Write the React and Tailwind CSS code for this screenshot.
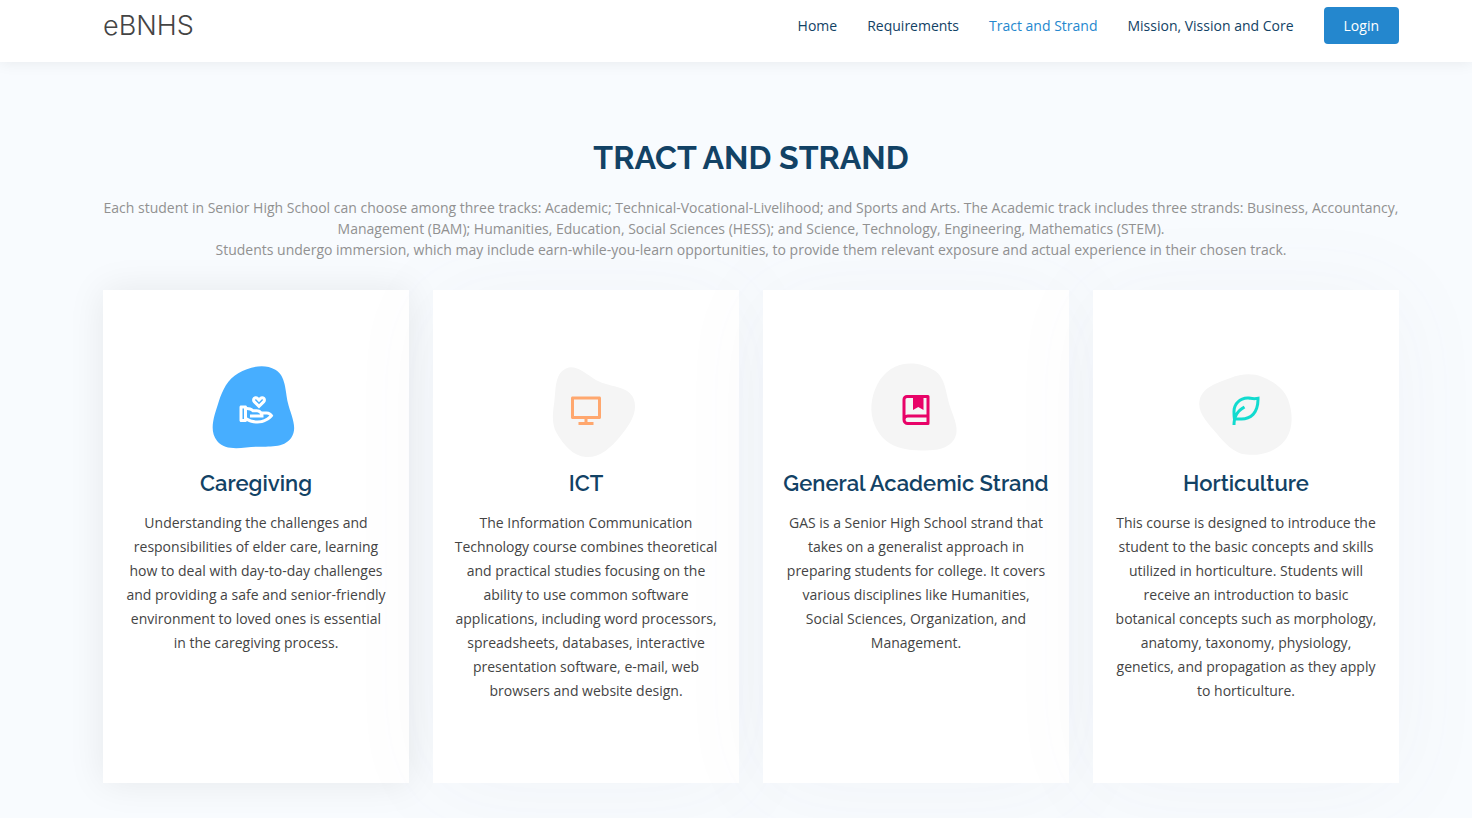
import React from "react";
import { RiHandHeartLine, RiComputerLine, RiLeafLine } from "react-icons/ri";

function BookMarkIcon({ className }) {
  return (
    <svg viewBox="0 0 24 24" fill="currentColor" className={className} aria-hidden="true">
      <path d="M3 18.5V5a3 3 0 0 1 3-3h14a1 1 0 0 1 1 1v18a1 1 0 0 1-1 1H6.5A3.5 3.5 0 0 1 3 18.5zM19 20v-3H6.5a1.5 1.5 0 0 0 0 3H19zM10 4H6a1 1 0 0 0-1 1v10.337A3.486 3.486 0 0 1 6.5 15H19V4h-2v8l-3.5-2-3.5 2V4z" />
    </svg>
  );
}

const links = [
  { label: "Home" },
  { label: "Requirements" },
  { label: "Tract and Strand", active: true },
  { label: "Mission, Vission and Core" },
];

const strands = [
  {
    title: "Caregiving",
    text: "Understanding the challenges and responsibilities of elder care, learning how to deal with day-to-day challenges and providing a safe and senior-friendly environment to loved ones is essential in the caregiving process.",
    Icon: RiHandHeartLine,
    iconClass: "text-white",
    blobClass: "text-[#47aeff]",
    shadow: "shadow-[0_0_35px_0_rgba(0,0,0,0.08)]",
    blob: "M300,521.0016835830174C376.1290562159157,517.8887921683347,466.0731472004068,529.7835943286574,510.70327084640275,468.03025145048787C554.3714126377745,407.6079735673963,508.03601936045806,328.9844924480964,491.2728898941984,256.3432110539036C474.5976632858925,184.082847569629,479.9380746630129,96.60480741107993,416.23090153303,58.64404602377083C348.86323505073057,18.502131276798302,261.93793281208167,40.57373210992963,193.5410806939664,78.93577620505333C130.42746243093433,114.334589627462,98.30271207620316,179.96522072025542,76.75703585869454,249.04625023123273C51.97151888228291,328.5150500222984,13.704378332031375,421.85034740162234,66.52175969318436,486.19268352777647C119.04800174914682,550.1803526380478,217.28368757567262,524.383925680826,300,521.0016835830174",
  },
  {
    title: "ICT",
    text: "The Information Communication Technology course combines theoretical and practical studies focusing on the ability to use common software applications, including word processors, spreadsheets, databases, interactive presentation software, e-mail, web browsers and website design.",
    Icon: RiComputerLine,
    iconClass: "text-[#ffa76e]",
    blobClass: "text-[#f5f5f5]",
    shadow: "shadow-[0_5px_90px_0_rgba(110,123,131,0.05)]",
    blob: "M300,582.0697525312426C382.5290701553225,586.8405444964366,449.9789794690241,525.3245884688669,502.5850820975895,461.55621195738473C556.606425686781,396.0723002908107,615.8543463187945,314.28637112970534,586.6730223649479,234.56875336149918C558.9533121215079,158.8439757836574,454.9685369536778,164.00468322053177,381.49747125262974,130.76875717737553C312.15926192815925,99.40240125094834,248.97055460311594,18.661163978235184,179.8680185752513,50.54337015887873C110.5421016452524,82.52863877960104,119.82277516462835,180.83849132639028,109.12597500060166,256.43424936330496C100.08760227029461,320.3096726198365,92.17705696193138,384.0621239912766,124.79988738764834,439.7174275375508C164.83382741302287,508.01625554203684,220.96474134820875,577.5009287672846,300,582.0697525312426",
  },
  {
    title: "General Academic Strand",
    text: "GAS is a Senior High School strand that takes on a generalist approach in preparing students for college. It covers various disciplines like Humanities, Social Sciences, Organization, and Management.",
    Icon: BookMarkIcon,
    iconClass: "text-[#e80368]",
    blobClass: "text-[#f5f5f5]",
    shadow: "shadow-[0_5px_90px_0_rgba(110,123,131,0.05)]",
    blob: "M300,541.5067337569781C382.14930387511276,545.0595476570109,479.8736841581634,548.3450877840088,526.4010558755058,480.5488172755941C571.5218469581645,414.80211281144784,517.5187510058486,332.0715597781072,496.52539010469104,255.14436215662573C477.37192572678356,184.95920475031193,473.57363656557914,105.61284051026155,413.0603344069578,65.22779650032875C343.27470386102294,18.654635553484475,251.2091493199835,5.337323636656869,175.0934190732945,40.62881213300186C97.87086631185822,76.43348514350839,51.98124368387456,156.15599469081315,36.44837278890362,239.84606092416172C21.716077023791087,319.22268207091537,43.775223500013084,401.1760424656574,96.891909868211,461.97329694683043C147.22146801428983,519.5804099606455,223.5754009179313,538.201503339737,300,541.5067337569781",
  },
  {
    title: "Horticulture",
    text: "This course is designed to introduce the student to the basic concepts and skills utilized in horticulture. Students will receive an introduction to basic botanical concepts such as morphology, anatomy, taxonomy, physiology, genetics, and propagation as they apply to horticulture.",
    Icon: RiLeafLine,
    iconClass: "text-[#11dbcf]",
    blobClass: "text-[#f5f5f5]",
    shadow: "shadow-[0_5px_90px_0_rgba(110,123,131,0.05)]",
    blob: "M300,566.797414625762C385.7384707136149,576.1784315230908,478.7894351017131,552.8928747891023,531.9192734346935,484.94944893311C584.6109503024035,417.5663521118492,582.489472248146,322.67544863468447,553.9536738515405,242.03673114598146C529.1557734026468,171.96086150256528,465.24506316201064,127.66468636344209,395.9583748389544,100.7403814666027C334.2173773831606,76.7482773500951,269.4350130405921,84.62216499799875,207.1952322260088,107.2889140133804C132.92018162631612,134.33871894543012,41.79353780512637,160.00259165414826,22.644507872594943,236.69541883565114C3.319112789854554,314.0945973066697,72.72355303640163,379.243833228382,124.04198916343866,440.3218312028393C172.9286146004772,498.5055451809895,224.45579914871206,558.5317968840102,300,566.797414625762",
  },
];

function Header() {
  return (
    <header className="relative z-10 flex items-start justify-between bg-white pt-[7px] pr-[73px] pb-[17px] pl-[103px] shadow-[0_0_15px_rgba(0,0,0,0.08)]">
      <a
        href="#home"
        className="font-['Inter',sans-serif] text-[27px] leading-[38px] font-light text-[#444444]"
      >
        eBNHS
      </a>
      <nav className="flex items-center gap-[30px]">
        {links.map(({ label, active }) => (
          <a
            key={label}
            href="#tract"
            className={active ? "text-[#2487ce]" : "text-[#124265]"}
          >
            {label}
          </a>
        ))}
        <a
          href="#login"
          className="rounded bg-[#2487ce] px-5 py-2 font-medium text-white"
        >
          Login
        </a>
      </nav>
    </header>
  );
}

function StrandCard({ title, text, Icon, iconClass, blobClass, blob, shadow }) {
  return (
    <article className={`bg-white px-5 pt-[70px] pb-20 text-center ${shadow}`}>
      <div className="mx-auto mb-2.5 grid size-[100px] place-items-center">
        <svg
          viewBox="0 0 600 600"
          className={`col-start-1 row-start-1 size-[100px] ${blobClass}`}
          aria-hidden="true"
        >
          <path fill="currentColor" d={blob} />
        </svg>
        <Icon className={`col-start-1 row-start-1 size-9 ${iconClass}`} />
      </div>
      <h3 className="mb-[15px] font-['Raleway','Lato',sans-serif] text-[22px] leading-[26px] font-semibold whitespace-nowrap text-[#124265]">
        {title}
      </h3>
      <p className="leading-6">{text}</p>
    </article>
  );
}

export default function App() {
  return (
    <div className="min-h-screen bg-[#f8fbfe] font-['Open_Sans',sans-serif] text-sm leading-[21px] text-[#444444]">
      <Header />
      <main className="pt-[77px] pr-[73px] pb-9 pl-[103px]">
        <div className="pb-[30px] text-center">
          <h2 className="mb-5 font-['Raleway','Lato',sans-serif] text-[32px] leading-[38px] font-bold text-[#124265] uppercase">
            Tract and Strand
          </h2>
          <p className="text-[#919191]">
            Each student in Senior High School can choose among three tracks:
            Academic; Technical-Vocational-Livelihood; and Sports and Arts. The
            Academic track includes three strands: Business, Accountancy,
            Management (BAM); Humanities, Education, Social Sciences (HESS); and
            Science, Technology, Engineering, Mathematics (STEM).
            <br />
            Students undergo immersion, which may include earn-while-you-learn
            opportunities, to provide them relevant exposure and actual
            experience in their chosen track.
          </p>
        </div>
        <section className="grid grid-cols-4 gap-6">
          {strands.map((strand) => (
            <StrandCard key={strand.title} {...strand} />
          ))}
        </section>
      </main>
    </div>
  );
}
